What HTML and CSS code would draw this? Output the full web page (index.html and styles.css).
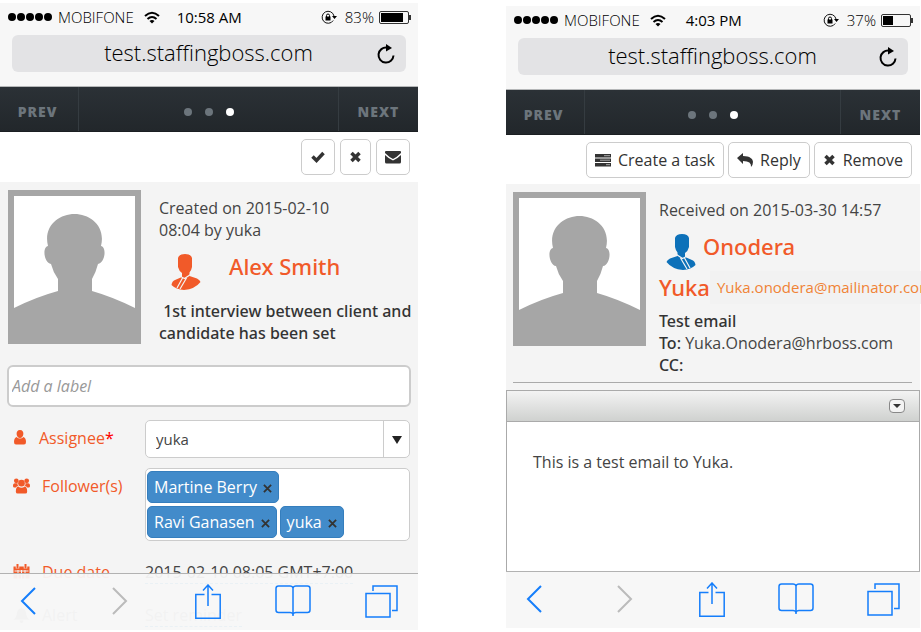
FILE: index.html
```html
<!DOCTYPE html>
<html lang="en">
<head>
<meta charset="utf-8">
<title>Staffing Boss mobile</title>
<link rel="stylesheet" href="styles.css">
</head>
<body>
<svg class="sprite" aria-hidden="true">
  <symbol id="wifi" viewBox="0 0 16 13"><g fill="none" stroke="#000" stroke-width="2"><path d="M1 5Q8-1.500 15 5"/><path d="M3.500 8Q8 4 12.500 8"/></g><path d="M5.500 10Q8 8 10.500 10L8 12.500z"/></symbol>
  <symbol id="lock" viewBox="0 0 16 14"><path d="M12.200 10.500A6 6 0 1 1 13 6" fill="none" stroke="#111" stroke-width="1"/><path d="M11 6h5l-2.500 3zM4.500 6.500h5v4h-5z"/><path d="M5.500 7V5.500a1.500 1.500 0 0 1 3 0V7" fill="none" stroke="#000"/></symbol>
  <symbol id="reload" viewBox="0 0 18 20"><path d="M16.500 11.500A7.500 7.500 0 1 1 10 3.600" fill="none" stroke="#000" stroke-width="2"/><path d="M9 0l6 4-6 3.500z"/></symbol>
  <symbol id="silhouette" viewBox="0 0 121 142"><path fill="#a6a6a6" d="M0 142V112Q22 101 44 95V83Q39 76 37 68C30 67 28 51 34 50C29 30 45 18 60.500 18S92 30 87 50C93 51 91 67 84 68Q82 76 78 83V95Q99 101 121 112V142z"/></symbol>
  <symbol id="person" viewBox="0 0 30 36"><path d="M7 4Q8 0 14 0T21 4V13Q20.500 16 18.500 18.500V22L26 24.500Q29 26 29.500 28Q24 35 13 36Q5 35.500 .5 31Q1 27 4 26L11 23V19Q8 17 7 13z"/><path fill="none" stroke="#f4f4f4" stroke-width="1.200" d="M10.500 23l3 1.500 6-4M11.500 24L6 34M15.500 24L9 35"/></symbol>
  <symbol id="person-right" viewBox="0 0 30 36"><path d="M23 4Q22 0 16 0T9 4V13Q9.500 16 11.500 18.500V22L4 24.500Q1 26 .5 28Q6 35 17 36Q25 35.500 29.500 31Q29 27 26 26L19 23V19Q22 17 23 13z"/><path fill="none" stroke="#f4f4f4" stroke-width="1.200" d="M19.500 23l-3 1.500-6-4M18.500 24l5.500 10M14.500 24L21 35"/></symbol>
  <symbol id="check" viewBox="0 0 16 14"><path d="M2.500 6.500l4 4 7-7.500" fill="none" stroke="currentColor" stroke-width="3.500"/></symbol>
  <symbol id="cross" viewBox="0 0 12 12"><path d="M2 2l8 8M10 2l-8 8" fill="none" stroke="currentColor" stroke-width="3.500"/></symbol>
  <symbol id="times" viewBox="0 0 10 10"><path d="M1 1l8 8M9 1l-8 8" fill="none" stroke="currentColor" stroke-width="2"/></symbol>
  <symbol id="mail" viewBox="0 0 16 14"><path fill="currentColor" d="M1 1h14a1 1 0 0 1 1 1v1q-4 4-8 6-4-2-8-6V2a1 1 0 0 1 1-1zM0 5q4 4 8 5.500Q12 9 16 5v7a1.500 1.500 0 0 1-1.500 1.500h-13A1.500 1.500 0 0 1 0 12z"/></symbol>
  <symbol id="tasks" viewBox="0 0 16 14"><path fill="currentColor" d="M0 1h16v3.500H0zM0 5.500h16V9H0zM0 10h16v3.500H0z"/><path d="M9 2.700h6M5 7.200h10M11 11.700h4" stroke="#aaa"/></symbol>
  <symbol id="reply" viewBox="0 0 16 14"><path fill="currentColor" d="M0 5L6 0v3C13 3 16 6 16 9q0 3-2 5 .8-6-8-6v3z"/></symbol>
  <symbol id="user" viewBox="0 0 14 15"><path fill="currentColor" d="M7 0C12 0 11 8 7 8S2 0 7 0zM3.500 7Q7 10 10.500 7 13 8 13 12 13 14.500 11 14.500H3Q1 14.500 1 12 1 8 3.500 7z"/></symbol>
  <symbol id="users" viewBox="0 0 18 16"><g fill="currentColor"><circle cx="3.500" cy="2.500" r="2.500"/><circle cx="14.500" cy="2.500" r="2.500"/><path d="M0 8Q0 5 2 5h3q-1 2 1 3-2 0-3 1.500H1Q0 9.500 0 8zM18 8q0-3-2-3h-3q1 2-1 3 2 0 3 1.500h2q1 0 1-1.500z"/><circle cx="9" cy="5" r="3.500"/><path d="M5.500 8.500Q9 11 12.500 8.500 15 9 15 14q0 2-2 2H5q-2 0-2-2 0-5 2.500-5.500z"/></g></symbol>
  <symbol id="calendar" viewBox="0 0 16 16"><path fill="currentColor" d="M0 2.500h16v12H0z"/><path d="M4 0v4.500M12 0v4.500" stroke="#f4f4f4" stroke-width="3.500"/><path d="M4 0v4.500M12 0v4.500" stroke="currentColor" stroke-width="2"/><path d="M1 7h14M1 10h14M4.500 6v9M8 6v9M11.500 6v9" stroke="#f4f4f4"/></symbol>
  <symbol id="bell" viewBox="0 0 16 16"><path fill="currentColor" d="M8 0l1 1.500Q12 2 12.500 6 13 11 16 12.500H0Q3 11 3.500 6 4 2 7 1.500zM6 13.500h4Q9.500 16 8 16T6 13.500z"/></symbol>
  <symbol id="back" viewBox="0 0 16 28"><path d="M15 1L2 14l13 13" fill="none" stroke="currentColor" stroke-width="2"/></symbol>
  <symbol id="forward" viewBox="0 0 16 28"><path d="M1 1l13 13L1 27" fill="none" stroke="currentColor" stroke-width="2"/></symbol>
  <symbol id="share" viewBox="0 0 26 35"><path d="M9.500 10.500H.8v23.700h24.400V10.500h-8.700M13 22V1M8 6.500l5-5.500 5 5.500" fill="none" stroke="currentColor" stroke-width="1.500"/></symbol>
  <symbol id="book" viewBox="0 0 36 32"><path d="M18 31V3Q17.500 1 15 1H3.500Q1 1 1 3.500V25q0 2.500 2.500 2.500H15q2.500 0 3 2 .5-2 3-2h11.500q2.500 0 2.500-2.500V3.500Q35 1 32.500 1H21q-2.500 0-3 2" fill="none" stroke="currentColor" stroke-width="1.500"/></symbol>
  <symbol id="tabs" viewBox="0 0 33 33"><path d="M1 8.500h24V32H1zM8 6V1h24v24.500h-5" fill="none" stroke="currentColor" stroke-width="1.500"/></symbol>
</svg>

<main class="screens">
  <section class="phone">
    <header class="chrome">
      <div class="status">
        <span class="signal"><i></i><i></i><i></i><i></i><i></i></span>
        <span class="carrier">MOBIFONE</span>
        <svg class="wifi"><use href="#wifi"/></svg>
        <time>10:58 AM</time>
        <svg class="lock"><use href="#lock"/></svg>
        <span class="percent">83%</span>
        <span class="battery"><i style="width:83%"></i></span>
      </div>
      <div class="address"><span>test.staffingboss.com</span><button type="button" aria-label="Reload"><svg><use href="#reload"/></svg></button></div>
    </header>
    <nav class="pager">
      <button type="button">PREV</button>
      <span class="dots"><i></i><i></i><i class="on"></i></span>
      <button type="button">NEXT</button>
    </nav>
    <div class="actions">
      <button type="button" aria-label="Complete"><svg><use href="#check"/></svg></button>
      <button type="button" aria-label="Remove"><svg class="small"><use href="#cross"/></svg></button>
      <button type="button" aria-label="Email"><svg><use href="#mail"/></svg></button>
    </div>
    <div class="content">
      <div class="summary">
        <div class="avatar"><svg viewBox="0 0 121 142" preserveAspectRatio="none"><use href="#silhouette"/></svg></div>
        <div class="info">
          <p>Created on 2015-02-10<br>08:04 by yuka</p>
          <h2 class="person-row"><svg class="person"><use href="#person"/></svg><a href="#alex">Alex Smith</a></h2>
          <p class="strong">&nbsp;1st interview between client and candidate has been set</p>
        </div>
      </div>
      <form class="task">
        <input class="label-input" type="text" placeholder="Add a label" aria-label="Add a label">
        <div class="row">
          <label for="assignee"><svg class="user"><use href="#user"/></svg><span>Assignee<b>*</b></span></label>
          <div class="select"><select id="assignee"><option>yuka</option></select><span class="arrow"></span></div>
        </div>
        <div class="row">
          <span class="caption"><svg class="users"><use href="#users"/></svg>Follower(s)</span>
          <div class="chips">
            <span class="chip">Martine Berry<button type="button" aria-label="Remove Martine Berry"><svg><use href="#times"/></svg></button></span>
            <span class="chip">Ravi Ganasen<button type="button" aria-label="Remove Ravi Ganasen"><svg><use href="#times"/></svg></button></span>
            <span class="chip">yuka<button type="button" aria-label="Remove yuka"><svg><use href="#times"/></svg></button></span>
          </div>
        </div>
        <div class="schedule">
          <div class="row"><span class="caption"><svg><use href="#calendar"/></svg>Due date</span><span class="value"><a href="#due">2015-02-10 08:05 GMT+7:00</a></span></div>
          <div class="row"><span class="caption muted"><svg><use href="#bell"/></svg>Alert</span><span class="value muted"><a href="#alert">Set reminder</a></span></div>
        </div>
      </form>
    </div>
    <footer class="browser-bar over">
      <button type="button" aria-label="Back"><svg class="chevron"><use href="#back"/></svg></button>
      <button type="button" aria-label="Forward" disabled><svg class="chevron"><use href="#forward"/></svg></button>
      <button type="button" aria-label="Share"><svg class="share"><use href="#share"/></svg></button>
      <button type="button" aria-label="Bookmarks"><svg class="book"><use href="#book"/></svg></button>
      <button type="button" aria-label="Tabs"><svg class="tabs"><use href="#tabs"/></svg></button>
    </footer>
  </section>

  <section class="phone second">
    <header class="chrome">
      <div class="status">
        <span class="signal"><i></i><i></i><i></i><i></i><i></i></span>
        <span class="carrier">MOBIFONE</span>
        <svg class="wifi"><use href="#wifi"/></svg>
        <time>4:03 PM</time>
        <svg class="lock"><use href="#lock"/></svg>
        <span class="percent">37%</span>
        <span class="battery"><i style="width:37%"></i></span>
      </div>
      <div class="address"><span>test.staffingboss.com</span><button type="button" aria-label="Reload"><svg><use href="#reload"/></svg></button></div>
    </header>
    <nav class="pager">
      <button type="button">PREV</button>
      <span class="dots"><i></i><i></i><i class="on"></i></span>
      <button type="button">NEXT</button>
    </nav>
    <div class="actions">
      <button type="button"><svg><use href="#tasks"/></svg>Create a task</button>
      <button type="button"><svg><use href="#reply"/></svg>Reply</button>
      <button type="button"><svg class="small"><use href="#cross"/></svg>Remove</button>
    </div>
    <div class="content">
      <div class="summary">
        <div class="avatar"><svg viewBox="0 0 121 142" preserveAspectRatio="none"><use href="#silhouette"/></svg></div>
        <div class="info">
          <p>Received on 2015-03-30 14:57</p>
          <h2 class="sender"><span><svg class="person blue"><use href="#person-right"/></svg><a href="#onodera">Onodera</a></span><span><a href="#onodera">Yuka</a><a class="email" href="#mail-to">Yuka.onodera@mailinator.com</a></span></h2>
          <p><b>Test email</b><br><b>To:</b> Yuka.Onodera@hrboss.com<br><b>CC:</b></p>
        </div>
      </div>
      <hr>
      <article class="message">
        <div class="message-bar"><button type="button" aria-label="Expand toolbar"></button></div>
        <p>This is a test email to Yuka.</p>
      </article>
    </div>
    <footer class="browser-bar">
      <button type="button" aria-label="Back"><svg class="chevron"><use href="#back"/></svg></button>
      <button type="button" aria-label="Forward" disabled><svg class="chevron"><use href="#forward"/></svg></button>
      <button type="button" aria-label="Share"><svg class="share"><use href="#share"/></svg></button>
      <button type="button" aria-label="Bookmarks"><svg class="book"><use href="#book"/></svg></button>
      <button type="button" aria-label="Tabs"><svg class="tabs"><use href="#tabs"/></svg></button>
    </footer>
  </section>
</main>
</body>
</html>
```
FILE: styles.css
```css
* { box-sizing: border-box; }
body {
  margin: 0;
  background: #fff;
  color: #444;
  font: 16px/22px "Open Sans", "Noto Sans", sans-serif;
  overflow-x: hidden;
}
p, h2 { margin: 0; }
a { color: inherit; text-decoration: none; }
button, input, select { font: inherit; color: inherit; }
button { border: 0; padding: 0; background: none; }
svg { flex: none; display: block; }
.sprite { position: absolute; width: 0; height: 0; }

.screens {
  display: grid;
  grid-template-columns: 418fr 414fr;
  column-gap: 88px;
  padding: 3px 1px 2px 0;
}
.phone {
  position: relative;
  display: flex;
  flex-direction: column;
  min-width: 0;
}
.second { margin: 3px 0 2px; }

/* Browser chrome */
.chrome {
  background: #f7f7f7;
  padding-bottom: 14px;
  color: #000;
}
.status {
  display: flex;
  align-items: center;
  height: 28px;
  margin-bottom: 4px;
  padding: 0 7px 0 8px;
  font-size: 15px;
}
.signal { display: flex; gap: 1px; margin-right: 6px; }
.signal i { width: 8px; height: 8px; border-radius: 50%; background: #000; }
.carrier, .percent { font-weight: 300; }
.wifi { width: 16px; height: 13px; margin: 0 17px 0 10px; }
.second .wifi { margin-right: 20px; }
.lock { width: 16px; height: 14px; margin: 0 8px 0 auto; }
.battery {
  position: relative;
  width: 30px;
  height: 13px;
  margin: 0 2px 0 5px;
  padding: 1px;
  border: 1px solid #333;
  border-radius: 2px;
}
.battery i { display: block; height: 100%; background: #000; }
.battery::after {
  content: "";
  position: absolute;
  right: -3px;
  top: 3px;
  width: 2px;
  height: 5px;
  background: #333;
}
.address {
  display: flex;
  align-items: center;
  height: 37px;
  margin: 0 12px;
  padding: 0 11px;
  border-radius: 6px;
  background: #e3e3e5;
  font-size: 22px;
  font-weight: 300;
}
.address span { flex: 1; padding: 0 0 4px 17px; text-align: center; }
.address svg { width: 18px; height: 20px; }

/* Pager */
.pager {
  display: grid;
  grid-template-columns: 78px 1fr 79px;
  height: 46px;
  border-top: 1px solid #b5b7b8;
  border-bottom: 1px solid #1b1f22;
  background: linear-gradient(#2b3136, #22272b);
}
.pager button {
  padding: 5px 3px 0 0;
  color: #6c757c;
  font-size: 14px;
  font-weight: 800;
  letter-spacing: 1px;
}
.pager button:last-child { padding-right: 0; }
.dots {
  display: flex;
  align-items: center;
  justify-content: center;
  gap: 13px;
  padding-top: 5px;
  border: solid #353c41;
  border-width: 0 1px;
}
.dots i { width: 8px; height: 8px; border-radius: 50%; background: #6c757c; }
.dots .on { background: #fff; }

/* Action buttons */
.actions {
  display: flex;
  justify-content: flex-end;
  gap: 5px;
  padding: 7px 8px;
}
.second .actions { gap: 4px; padding-bottom: 6px; }
.actions button {
  display: flex;
  align-items: center;
  gap: 7px;
  height: 36px;
  padding: 0 8px;
  border: 1px solid #ccc;
  border-radius: 5px;
  background: #fff;
  color: #333;
}
.actions svg { width: 16px; height: 14px; }
.actions svg.small { width: 13px; height: 12px; }

/* Record summary */
.content {
  display: flex;
  flex: 1;
  flex-direction: column;
  background: #f4f4f4;
}
.summary { display: flex; gap: 18px; padding: 8px 5px 0 8px; }
.second .summary { gap: 13px; padding-left: 7px; }
.avatar {
  flex: none;
  width: 133px;
  height: 154px;
  border: 6px solid #a6a6a6;
  background: #fff;
}
.avatar svg { width: 100%; height: 100%; }
.info { flex: 1; min-width: 0; padding-top: 7px; }
.strong, b { font-family: "Noto Sans", sans-serif; font-weight: 500; color: #333; }
h2 {
  color: #f15a29;
  font-family: "Noto Sans", sans-serif;
  font-size: 22px;
  font-weight: 500;
  line-height: 32px;
}
.person { width: 30px; height: 36px; fill: #f15a29; }
.blue { fill: #0d71b9; }
.person-row { display: flex; gap: 28px; margin: 9px 0 10px 12px; }
.person-row svg { margin-top: 4px; }
.sender { margin: 5px 0 2px; line-height: 41px; }
.sender span { display: flex; align-items: center; height: 41px; }
.sender svg { margin: 10px 7px 0; }
.email {
  padding: 0 7px;
  background: #f2f2f2;
  color: #f08336;
  font-family: "Open Sans", sans-serif;
  font-size: 15px;
  font-weight: 400;
  line-height: 33px;
  white-space: nowrap;
}

/* Task form */
.task { display: grid; gap: 10px; padding: 21px 8px 4px; }
.label-input {
  height: 42px;
  margin: 0 -1px 3px;
  padding: 0 3px;
  border: 2px solid #ccc;
  border-radius: 6px;
  background: #fff;
}
.label-input::placeholder { color: #999; font-style: italic; opacity: 1; }
.row { display: grid; grid-template-columns: 137px 1fr; }
.row label, .caption {
  display: flex;
  align-items: flex-start;
  gap: 12px;
  padding: 7px 0 0 5px;
  color: #f15a29;
}
.row label svg, .caption svg { width: 17px; height: 16px; margin-top: 3px; }
.row label svg.user { width: 14px; height: 15px; }
.row label b { color: #f00; font-weight: 400; }
.select { position: relative; }
.select select {
  display: block;
  width: 100%;
  height: 38px;
  padding: 0 36px 0 10px;
  border: 1px solid #ccc;
  border-radius: 5px;
  background: #fff;
  color: #444;
  font-size: 15px;
  appearance: none;
}
.arrow {
  position: absolute;
  inset: 1px 1px 1px auto;
  width: 26px;
  border-left: 1px solid #ccc;
  pointer-events: none;
}
.arrow::after {
  content: "";
  position: absolute;
  left: 8px;
  top: 15px;
  border: solid transparent;
  border-width: 8px 5px 0;
  border-top-color: #222;
}
.chips {
  display: flex;
  flex-wrap: wrap;
  gap: 3px;
  padding: 2px 1px;
  border: 1px solid #ccc;
  border-radius: 5px;
  background: #fff;
}
.chip {
  display: flex;
  align-items: center;
  gap: 6px;
  height: 32px;
  padding: 0 6px;
  border: 1px solid #357ebd;
  border-radius: 5px;
  background: #428bca;
  color: #fff;
}
.chip button { color: #333; }
.chip svg { width: 9px; height: 9px; margin-top: 3px; }
.schedule { display: grid; gap: 21px; padding-top: 10px; }
.schedule .caption { padding-top: 0; }
.value a { display: inline-block; border-bottom: 1px dashed #08c; }
.value { height: 22px; }
.muted { color: #999; }

/* Message */
hr {
  width: calc(100% - 15px);
  margin: 6px 8px 7px 7px;
  border: 0;
  border-top: 1px solid #aaa;
}
.message { flex: 1; border: solid #aaa; border-width: 1px 1px 0; background: #fff; }
.message-bar {
  display: flex;
  justify-content: flex-end;
  padding: 8px 14px;
  border-bottom: 1px solid #aaa;
  background: linear-gradient(#f3f3f3, #cfd1cf);
}
.message-bar button {
  display: grid;
  place-items: center;
  width: 16px;
  height: 14px;
  border: 1px solid #888;
  border-radius: 4px;
  background: #f3f3f3;
}
.message-bar button::after {
  content: "";
  border: solid transparent;
  border-width: 4px 4px 0;
  border-top-color: #333;
}
.message p { padding: 29px 26px; }

/* Browser toolbar */
.browser-bar {
  display: flex;
  align-items: center;
  justify-content: space-between;
  height: 57px;
  padding: 0 19px 2px 10px;
  border-top: 1px solid #b2b2b2;
  background: #f7f7f7;
  color: #157efb;
}
.over {
  position: absolute;
  inset: auto 0 0;
  background: rgba(247, 247, 247, .95);
}
.browser-bar button {
  display: grid;
  place-items: center;
  width: 36px;
}
.browser-bar button:disabled { padding-left: 8px; color: #bbb; }
.browser-bar button:nth-child(3) { padding-left: 6px; }
.chevron { width: 16px; height: 28px; }
.share { width: 26px; height: 35px; }
.book { width: 36px; height: 32px; }
.tabs { width: 33px; height: 33px; }
```
